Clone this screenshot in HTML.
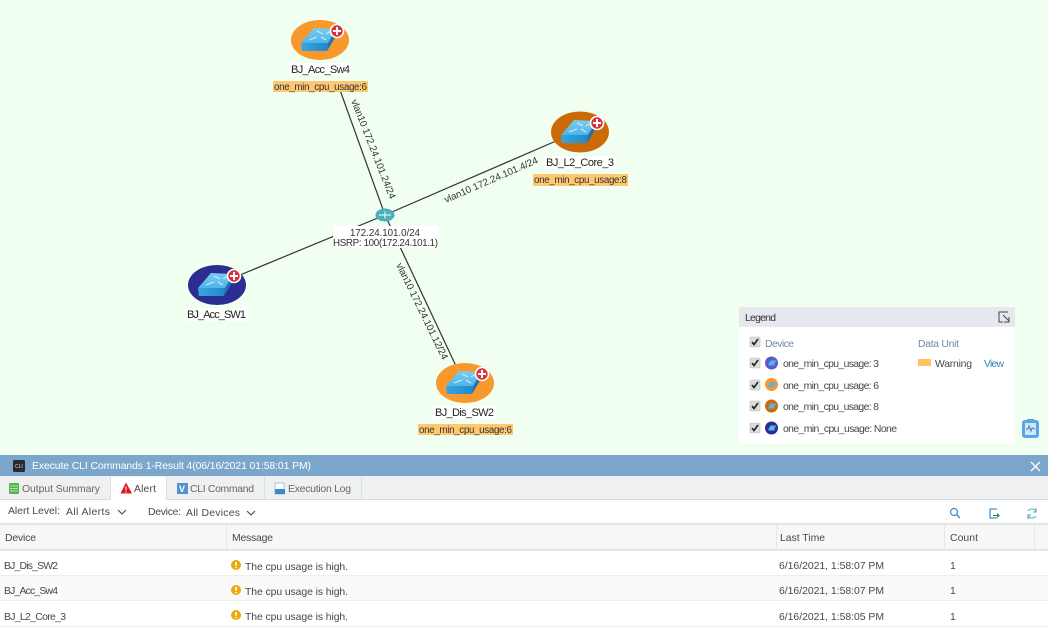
<!DOCTYPE html>
<html><head><meta charset="utf-8">
<style>
html,body{margin:0;padding:0;background:#f0fff0;width:1048px;height:631px;overflow:hidden}
svg{display:block;filter:blur(.35px)}
text{font-family:"Liberation Sans",sans-serif;font-size:10.4px;fill:#484848}
.n{fill:#222;font-size:11px}
.b{fill:#333;font-size:9.8px}
.h{fill:#6f8ba5}
</style></head><body>
<svg width="1048" height="631" viewBox="0 0 1048 631" xmlns="http://www.w3.org/2000/svg">
<defs>
<linearGradient id="t" x1="0" y1="0" x2="0" y2="1"><stop offset="0" stop-color="#78cdf2"/><stop offset="1" stop-color="#4fb4e8"/></linearGradient>
<linearGradient id="f" x1="0" y1="0" x2="1" y2="0"><stop offset="0" stop-color="#38a6e0"/><stop offset="1" stop-color="#2088cc"/></linearGradient>
<g id="sw">
<path d="M-19 3L-18 11L7 11L8 3Z" fill="url(#f)"/>
<path d="M8 3L7 11L16 -4L16 -11Z" fill="#1b74b0"/>
<path d="M-6 -12L16 -11L8 3L-19 3Z" fill="url(#t)"/>
<path d="M-3 -9L3 -6M11 -9L6 -6M-11 0L-3 -3M6 0L1 -3" stroke="#c9ecfa" stroke-width="1.200" fill="none"/>
<circle cx="17" cy="-9" r="6.500" fill="#d8323c" stroke="#fff" stroke-width="1.600"/>
<path d="M17 -13V-5M13 -9H21" stroke="#fff" stroke-width="2"/>
</g>
<g id="li">
<path d="M-3.500 1L-1.500 -2.500L4 -2.500L2.500 1L2.500 2.500L-3.500 2.500Z" fill="#58b4e8"/>
</g>
<g id="cb">
<rect x="-5" y="-5" width="10" height="10" rx="1.500" fill="#dcdcdc" stroke="#bbb" stroke-width=".6"/>
<path d="M-3 0L-1 2.500L3 -3" stroke="#222" stroke-width="1.600" fill="none"/>
</g>
<g id="wi">
<circle r="5" fill="#eda70f"/>
<path d="M0 -3V0.800M0 2V3.200" stroke="#fff" stroke-width="1.600"/>
</g>
</defs>

<rect width="1048" height="455" fill="#f0fff0"/>

<g stroke="#333" stroke-width="1.200" fill="none">
<path d="M385 215L340 90"/>
<path d="M385 215L556 141"/>
<path d="M385 215L240 275"/>
<path d="M385 215L456 366"/>
</g>

<text class="b" transform="translate(351 101) rotate(68.500)" textLength="106" lengthAdjust="spacing">vlan10 172.24.101.24/24</text>
<text class="b" transform="translate(446 203) rotate(-23.500)" textLength="101" lengthAdjust="spacing">vlan10 172.24.101.4/24</text>
<text class="b" transform="translate(396 265) rotate(64)" textLength="106" lengthAdjust="spacing">vlan10 172.24.101.12/24</text>

<ellipse cx="385" cy="215" rx="9.500" ry="6.500" fill="#4cb0bb"/>
<path d="M379 215H391M385 211.500V218.500" stroke="#d6f3f3" stroke-width="1.200"/>
<rect x="333" y="226" width="105" height="22" fill="#fff"/>
<text x="350" y="236" class="b" textLength="70" lengthAdjust="spacing">172.24.101.0/24</text>
<text x="333" y="246" class="b" textLength="105" lengthAdjust="spacing">HSRP: 100(172.24.101.1)</text>

<ellipse cx="320" cy="40" rx="29" ry="20" fill="#f9982c"/><use href="#sw" x="320" y="40"/>
<ellipse cx="580" cy="132" rx="29" ry="20.500" fill="#cc6a08"/><use href="#sw" x="580" y="132"/>
<ellipse cx="217" cy="285" rx="29" ry="20" fill="#2b2d91"/><use href="#sw" x="217" y="285"/>
<ellipse cx="465" cy="383" rx="29" ry="20" fill="#f9982c"/><use href="#sw" x="465" y="383"/>

<rect x="289" y="63" width="62" height="13" fill="#fff"/>
<text x="291" y="73" class="n" textLength="59" lengthAdjust="spacing">BJ_Acc_Sw4</text>
<rect x="273" y="81" width="95" height="11" fill="#fdc871"/>
<text x="274" y="90" class="b" textLength="93" lengthAdjust="spacing">one_min_cpu_usage:6</text>

<rect x="544" y="156" width="72" height="13" fill="#fff"/>
<text x="546" y="166" class="n" textLength="68" lengthAdjust="spacing">BJ_L2_Core_3</text>
<rect x="533" y="174" width="95" height="12" fill="#fdc871"/>
<text x="534" y="183" class="b" textLength="93" lengthAdjust="spacing">one_min_cpu_usage:8</text>

<rect x="185" y="308" width="63" height="13" fill="#fff"/>
<text x="187" y="318" class="n" textLength="59" lengthAdjust="spacing">BJ_Acc_SW1</text>

<rect x="433" y="406" width="63" height="13" fill="#fff"/>
<text x="435" y="416" class="n" textLength="59" lengthAdjust="spacing">BJ_Dis_SW2</text>
<rect x="418" y="424" width="95" height="11" fill="#fdc871"/>
<text x="419" y="433" class="b" textLength="93" lengthAdjust="spacing">one_min_cpu_usage:6</text>

<!-- Legend -->
<rect x="739" y="307" width="276" height="137" rx="2" fill="#fff"/>
<path d="M739 327V309a2 2 0 0 1 2-2H1013a2 2 0 0 1 2 2V327Z" fill="#e5e9ed"/>
<text x="745" y="321" style="fill:#333" textLength="31" lengthAdjust="spacing">Legend</text>
<path d="M1008 312H999V322H1003M1003 315L1009 321M1009 317V322H1004" stroke="#444" stroke-width="1" fill="none"/>
<use href="#cb" x="755" y="342"/>
<text x="765" y="347" class="h" textLength="29" lengthAdjust="spacing">Device</text>
<text x="918" y="347" class="h" textLength="41" lengthAdjust="spacing">Data Unit</text>
<use href="#cb" x="755" y="363"/>
<circle cx="771.500" cy="363" r="6.500" fill="#5c59c9"/><use href="#li" x="772" y="363"/>
<text x="783" y="367" textLength="96" lengthAdjust="spacing">one_min_cpu_usage: 3</text>
<rect x="918" y="359" width="13" height="7" fill="#fdc35f"/>
<text x="935" y="367" textLength="37" lengthAdjust="spacing">Warning</text>
<text x="984" y="367" style="fill:#2f86bd" textLength="20" lengthAdjust="spacing">View</text>
<use href="#cb" x="755" y="385"/>
<circle cx="771.500" cy="384.500" r="6.500" fill="#f9982c"/><use href="#li" x="772" y="384.500"/>
<text x="783" y="389" textLength="96" lengthAdjust="spacing">one_min_cpu_usage: 6</text>
<use href="#cb" x="755" y="406"/>
<circle cx="771.500" cy="406" r="6.500" fill="#cc6a08"/><use href="#li" x="772" y="406"/>
<text x="783" y="410" textLength="96" lengthAdjust="spacing">one_min_cpu_usage: 8</text>
<use href="#cb" x="755" y="428"/>
<circle cx="771.500" cy="428" r="6.500" fill="#2b2d91"/><use href="#li" x="772" y="428"/>
<text x="783" y="432" textLength="114" lengthAdjust="spacing">one_min_cpu_usage: None</text>

<!-- floating icon -->
<rect x="1022" y="420" width="17" height="18" rx="3" fill="#5aa5e6"/>
<rect x="1025" y="423" width="11" height="12" fill="#cfe6fa"/>
<rect x="1027" y="419" width="7" height="3" fill="#5aa5e6"/>
<path d="M1026 429L1028 429L1029 426L1031 431L1032 428L1035 429" stroke="#3a7fc0" stroke-width="1" fill="none"/>

<!-- Panel -->
<rect y="455" width="1048" height="176" fill="#fff"/>
<rect y="455" width="1048" height="21" fill="#7ba7cc"/>
<rect x="13" y="460" width="12" height="12" rx="1.500" fill="#2a2a2a"/>
<text x="15" y="468" style="font-size:5px;fill:#ddd">CLI</text>
<text x="32" y="469" style="fill:#fff" textLength="279" lengthAdjust="spacing">Execute CLI Commands 1-Result 4(06/16/2021 01:58:01 PM)</text>
<path d="M1031 462L1040 471M1040 462L1031 471" stroke="#fff" stroke-width="1.300"/>

<rect y="476" width="1048" height="24" fill="#eef0f1"/>
<rect x="111" y="477" width="55" height="24" fill="#fff"/>
<path d="M110.500 476V500M166.500 476V500M264.500 476V500M361.500 476V500" stroke="#dcdfe1" stroke-width="1"/>
<path d="M0 499.500H111M166 499.500H1048" stroke="#d9dcde"/>

<rect x="9" y="483" width="10" height="11" rx="1" fill="#55b84a"/>
<path d="M10 486H18M10 488.500H18M10 491H18" stroke="#cdeac8" stroke-width=".8"/>
<text x="22" y="492" textLength="78" lengthAdjust="spacing" style="fill:#666">Output Summary</text>

<path d="M126 482.500L132 493.500H120.500Z" fill="#e0141c"/>
<path d="M126 486.500V490.500M126 491.500V492.900" stroke="#fff" stroke-width="1.100"/>
<text x="134" y="492" textLength="22" lengthAdjust="spacing">Alert</text>

<rect x="177" y="483" width="11" height="11" fill="#4f93cf"/>
<text x="179" y="492" style="font-size:9px;font-weight:bold;fill:#fff">V</text>
<text x="190" y="492" textLength="64" lengthAdjust="spacing" style="fill:#666">CLI Command</text>

<rect x="275" y="483" width="9" height="11" fill="#fff" stroke="#7aa" stroke-width=".6"/>
<rect x="275" y="489" width="10" height="5" fill="#3f86cf"/>
<text x="288" y="492" textLength="63" lengthAdjust="spacing" style="fill:#666">Execution Log</text>

<text x="8" y="514" textLength="52" lengthAdjust="spacing">Alert Level:</text>
<text x="66" y="515" textLength="44" lengthAdjust="spacing">All Alerts</text>
<path d="M118 510L122 514L126 510" stroke="#444" fill="none"/>
<text x="148" y="515" textLength="33" lengthAdjust="spacing">Device:</text>
<text x="186" y="516" textLength="54" lengthAdjust="spacing">All Devices</text>
<path d="M247 511L251 515L255 511" stroke="#444" fill="none"/>

<circle cx="954" cy="512" r="3.500" fill="none" stroke="#3f8ecb" stroke-width="1.200"/>
<path d="M956.500 514.500L960 518" stroke="#3f8ecb" stroke-width="1.400"/>
<path d="M997 509H990V518H997" fill="#fff" stroke="#2f7cc0" stroke-width="1.100"/>
<path d="M993 515H997V513L1000 515.500L997 518V516H993Z" fill="#1b9a50"/>
<path d="M1028 511A5 5 0 0 1 1036 511M1036 516A5 5 0 0 1 1028 516" stroke="#55bda0" stroke-width="1.100" fill="none"/>
<path d="M1036 508V512H1033M1028 519V515H1031" stroke="#3f9ad0" stroke-width="1" fill="none"/>

<rect y="523" width="1048" height="2" fill="#e4e4e4"/>
<rect y="525" width="1048" height="24" fill="#f7f7f7"/>
<rect y="549" width="1048" height="2" fill="#e4e4e4"/>
<path d="M226.500 525V549M776.500 525V549M944.500 525V549M1034.500 525V549" stroke="#e6e6e6"/>
<text x="5" y="541" textLength="31" lengthAdjust="spacing">Device</text>
<text x="232" y="541" textLength="41" lengthAdjust="spacing">Message</text>
<text x="780" y="541" textLength="45" lengthAdjust="spacing">Last Time</text>
<text x="950" y="541" textLength="28" lengthAdjust="spacing">Count</text>

<rect y="576" width="1048" height="25" fill="#fafafa"/>
<path d="M0 575.500H1048M0 600.500H1048M0 626.500H1048" stroke="#eee"/>

<text x="4" y="569" textLength="54" lengthAdjust="spacing">BJ_Dis_SW2</text>
<use href="#wi" x="236" y="565"/>
<text x="245" y="570" textLength="103" lengthAdjust="spacing">The cpu usage is high.</text>
<text x="779" y="569" textLength="105" lengthAdjust="spacing">6/16/2021, 1:58:07 PM</text>
<text x="950" y="569">1</text>

<text x="4" y="594" textLength="54" lengthAdjust="spacing">BJ_Acc_Sw4</text>
<use href="#wi" x="236" y="590"/>
<text x="245" y="595" textLength="103" lengthAdjust="spacing">The cpu usage is high.</text>
<text x="779" y="594" textLength="105" lengthAdjust="spacing">6/16/2021, 1:58:07 PM</text>
<text x="950" y="594">1</text>

<text x="4" y="620" textLength="62" lengthAdjust="spacing">BJ_L2_Core_3</text>
<use href="#wi" x="236" y="615"/>
<text x="245" y="620" textLength="103" lengthAdjust="spacing">The cpu usage is high.</text>
<text x="779" y="620" textLength="105" lengthAdjust="spacing">6/16/2021, 1:58:05 PM</text>
<text x="950" y="620">1</text>
</svg>
</body></html>
